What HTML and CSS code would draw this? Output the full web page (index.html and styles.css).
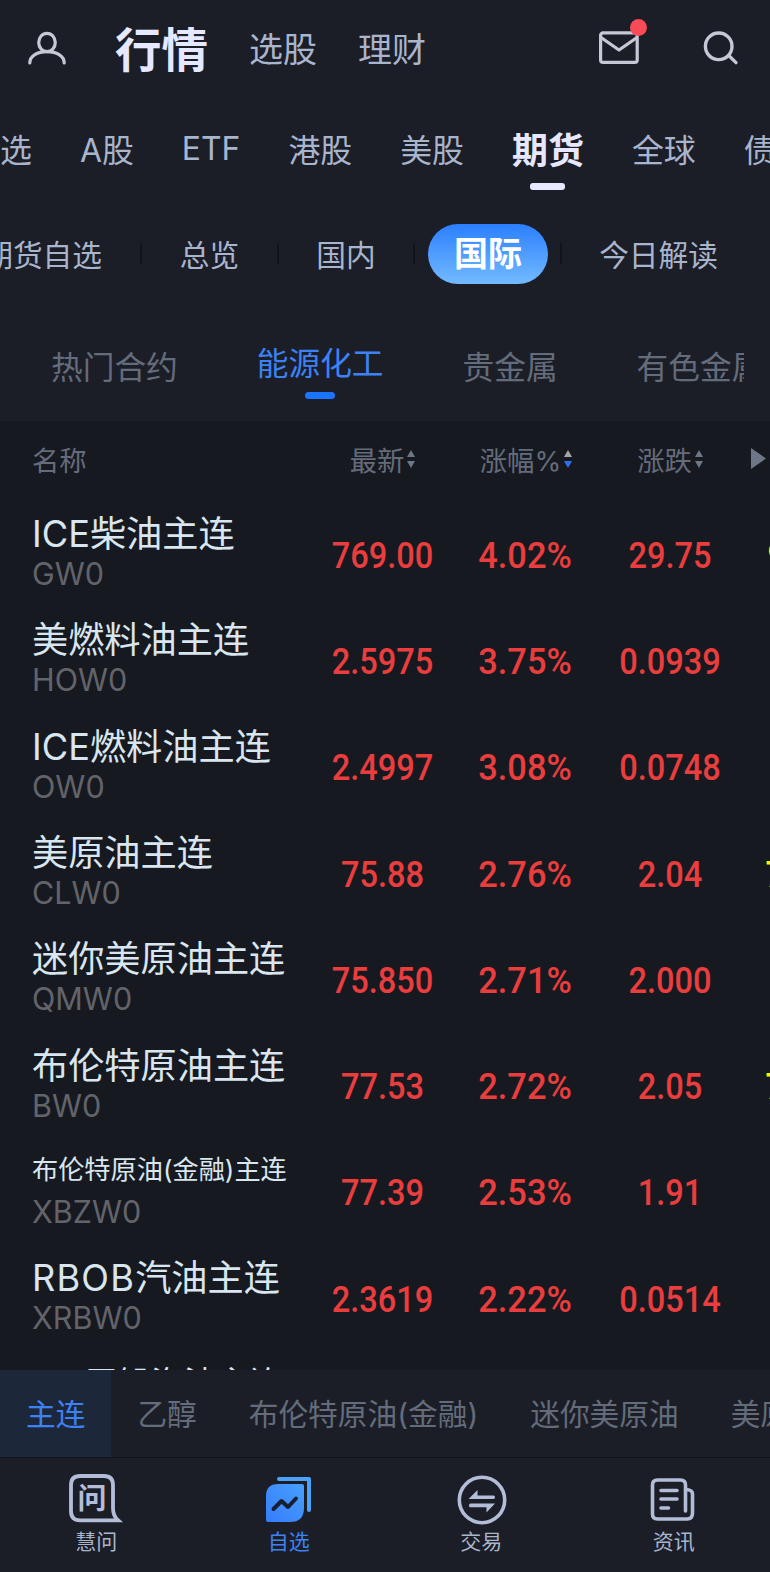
FILE: index.html
```html
<!DOCTYPE html>
<html lang="zh-CN">
<head>
  <meta charset="UTF-8" />
  <meta name="viewport" content="width=device-width, initial-scale=1" />
  <title>行情 - 期货</title>
  <link rel="stylesheet" href="styles.css">
</head>
<body>
<div class="app">

  <header class="topbar">
    <svg class="icon-user" viewBox="0 0 44 40" fill="none" stroke="#c6c8d6" stroke-width="3.2" stroke-linecap="round">
      <ellipse cx="22" cy="12.5" rx="8.3" ry="9.2"/>
      <path d="M4.800 33C4.800 26 12.500 21.600 22 21.600S39.200 26 39.200 33"/>
    </svg>
    <h1>行情</h1>
    <a class="top-link">选股</a>
    <a class="top-link">理财</a>
    <div class="top-actions">
      <div class="mail">
        <svg width="42" height="34" viewBox="0 0 42 34" fill="none" stroke="#c6c8d6" stroke-width="3.2" stroke-linejoin="round">
          <rect x="2.6" y="1.8" width="36.6" height="29.6" rx="2.5"/>
          <path d="M3 6.500L21 19 39 6.500"/>
        </svg>
        <span class="dot"></span>
      </div>
      <svg class="icon-search" width="38" height="36" viewBox="0 0 38 36" fill="none" stroke="#c6c8d6" stroke-width="3.4" stroke-linecap="round">
        <circle cx="16.7" cy="16.3" r="13.3"/>
        <path d="M27 25.800L34 32.600"/>
      </svg>
    </div>
  </header>

  <nav class="markets">
    <a>选</a>
    <a>A股</a>
    <a class="etf">ETF</a>
    <a>港股</a>
    <a>美股</a>
    <a class="active">期货</a>
    <a>全球</a>
    <a>债券</a>
  </nav>

  <nav class="regions">
    <a class="first">期货自选</a>
    <a>总览</a>
    <a>国内</a>
    <a><span class="pill">国际</span></a>
    <a>今日解读</a>
  </nav>

  <nav class="sectors">
    <a>热门合约</a>
    <a class="active">能源化工</a>
    <a>贵金属</a>
    <a>有色金属</a>
  </nav>

  <main class="quotes">
    <div class="row head">
      <span class="name">名称</span>
      <span>最新<svg class="sort" viewBox="0 0 8 18"><path class="up" d="M4 0l4 7H0z"/><path class="down" d="M0 11h8l-4 7z"/></svg></span>
      <span>涨幅%<svg class="sort desc" viewBox="0 0 8 18"><path class="up" d="M4 0l4 7H0z"/><path class="down" d="M0 11h8l-4 7z"/></svg></span>
      <span>涨跌<svg class="sort" viewBox="0 0 8 18"><path class="up" d="M4 0l4 7H0z"/><path class="down" d="M0 11h8l-4 7z"/></svg></span>
      <span class="more"><svg width="15" height="21" viewBox="0 0 15 21"><path d="M0 0l15 10.500L0 21z"/></svg></span>
    </div>
    <div class="row">
      <div class="name"><b>ICE柴油主连</b><small>GW0</small></div>
      <i>769.00</i><i class="pct">4.02%</i><i>29.75</i><i class="avg near">9.000</i>
    </div>
    <div class="row">
      <div class="name"><b>美燃料油主连</b><small>HOW0</small></div>
      <i>2.5975</i><i class="pct">3.75%</i><i>0.0939</i>
    </div>
    <div class="row">
      <div class="name"><b>ICE燃料油主连</b><small>OW0</small></div>
      <i>2.4997</i><i class="pct">3.08%</i><i>0.0748</i>
    </div>
    <div class="row">
      <div class="name"><b>美原油主连</b><small>CLW0</small></div>
      <i>75.88</i><i class="pct">2.76%</i><i>2.04</i><i class="avg">75.88</i>
    </div>
    <div class="row">
      <div class="name"><b>迷你美原油主连</b><small>QMW0</small></div>
      <i>75.850</i><i class="pct">2.71%</i><i>2.000</i>
    </div>
    <div class="row">
      <div class="name"><b>布伦特原油主连</b><small>BW0</small></div>
      <i>77.53</i><i class="pct">2.72%</i><i>2.05</i><i class="avg">77.53</i>
    </div>
    <div class="row">
      <div class="name"><b class="long">布伦特原油(金融)主连</b><small>XBZW0</small></div>
      <i>77.39</i><i class="pct">2.53%</i><i>1.91</i>
    </div>
    <div class="row">
      <div class="name"><b><span class="latin">RBOB</span>汽油主连</b><small>XRBW0</small></div>
      <i>2.3619</i><i class="pct">2.22%</i><i>0.0514</i>
    </div>
    <div class="row">
      <div class="name"><b class="mid">ICE无铅汽油主连</b><small></small></div>
    </div>
  </main>

  <nav class="contracts">
    <a class="active">主连</a>
    <a>乙醇</a>
    <a>布伦特原油(金融)</a>
    <a>迷你美原油</a>
    <a>美原油</a>
  </nav>

  <footer class="tabbar">
    <a>
      <svg viewBox="0 0 56 52" fill="none" stroke="#b3bdd8">
        <path stroke-width="3.8" stroke-linejoin="miter" d="M12 4H36Q45 4 45 13V36Q45 44 50 48.300H12Q3 48.300 3 39V13Q3 4 12 4Z"/>
        <text class="ask" x="24" y="37" text-anchor="middle">问</text>
      </svg>
      慧问
    </a>
    <a class="active">
      <svg viewBox="0 0 56 52">
        <defs>
          <linearGradient id="card" x1="1" y1="0" x2="0" y2="1">
            <stop offset="0" stop-color="#48a0fb"/>
            <stop offset="1" stop-color="#357cfd"/>
          </linearGradient>
        </defs>
        <path fill="url(#card)" d="M17 12H41Q43 12 43 14V36Q43 50 29 50H7Q5 50 5 48V24Q5 12 17 12Z"/>
        <path fill="none" stroke="#4aa3f8" stroke-width="4" stroke-linecap="round" stroke-linejoin="round" d="M18 7H48V38"/>
        <path fill="none" stroke="#18202f" stroke-width="4" stroke-linecap="round" stroke-linejoin="round" d="M12.500 37L20.500 29 27 35 35 26.500"/>
      </svg>
      自选
    </a>
    <a>
      <svg viewBox="0 0 56 52" fill="none" stroke="#b3bdd8">
        <circle cx="29" cy="28" r="22.7" stroke-width="3.6"/>
        <path fill="#b3bdd8" stroke="none" d="M15.500 27L24.500 18V23.500H40.500Q42 23.500 42 25.200T40.500 27ZM42 31.500L33.500 40.500V35.300H17.500Q16 35.300 16 33.400T17.500 31.500Z"/>
      </svg>
      交易
    </a>
    <a>
      <svg viewBox="0 0 56 52" fill="none" stroke="#b3bdd8" stroke-width="3.6" stroke-linecap="round">
        <path d="M39.500 39V13Q39.500 8 34.500 8H11.500Q6.500 8 6.500 13V42Q6.500 47 11.500 47H41Q46.500 47 46.500 41V22Q46.500 18 40.500 17.500"/>
        <path d="M15 18.500H31M15 27H31M15 36H22.500"/>
      </svg>
      资讯
    </a>
  </footer>

</div>
</body>
</html>
```
FILE: styles.css
```css
* {
  box-sizing: border-box;
}

body {
  margin: 0;
  background: #1b1e27;
  color: #a9b4cd;
  font-family: Inter, "Noto Sans CJK SC", sans-serif;
}

.app {
  width: 770px;
  height: 1572px;
  display: flex;
  flex-direction: column;
  overflow: hidden;
  white-space: nowrap;
}

/* top bar */
.topbar {
  height: 100px;
  display: flex;
  align-items: center;
  padding-left: 25px;
  font-size: 34px;
}

.icon-user {
  width: 44px;
  height: 40px;
}

h1 {
  margin: 0 41px 0 46px;
  font-size: 46.500px;
  line-height: 60px;
  font-weight: 700;
  color: #e6e8ff;
}

.top-link {
  margin-right: 41px;
  line-height: 50px;
}

.top-actions {
  margin-left: auto;
  margin-right: 30px;
  padding-bottom: 5px;
  display: flex;
  align-items: center;
  gap: 62px;
}

.mail {
  position: relative;
  height: 34px;
}

.dot {
  position: absolute;
  top: -12px;
  right: -7px;
  width: 17px;
  height: 17px;
  border-radius: 50%;
  background: #f94b57;
}

/* market tabs */
.markets {
  height: 100px;
  padding: 0 0 4px;
  display: flex;
  align-items: center;
  gap: 48px;
  font-size: 31.900px;
}

.markets .active {
  position: relative;
  font-size: 36px;
  font-weight: 700;
  color: #e6e8ff;
}

.markets .active::after {
  content: "";
  position: absolute;
  left: 18px;
  bottom: -16px;
  width: 35px;
  height: 7px;
  border-radius: 3px;
  background: #e6e8ff;
}

/* region tabs */
.regions {
  height: 107px;
  display: grid;
  grid-template-columns: 142px 137px 136px 147px 208px;
  align-items: center;
  font-size: 29.700px;
}

.regions a {
  display: flex;
  justify-content: center;
  align-items: center;
  height: 21px;
  border-right: 2px solid #12141b;
}

.regions a.first {
  justify-content: flex-end;
  padding-right: 38px;
}

.regions a:last-child {
  border: 0;
  padding-right: 15px;
}

.pill {
  width: 120px;
  flex: none;
  margin-left: 1px;
  line-height: 60px;
  border-radius: 30px;
  text-align: center;
  font-size: 34px;
  font-weight: 700;
  color: #fff;
  background: linear-gradient(#2b7fff, #73baff);
}

/* sector tabs */
.sectors {
  height: 114px;
  margin: 0 26px;
  padding: 1px 0 0 25px;
  display: flex;
  align-items: center;
  gap: 79px;
  overflow: hidden;
  font-size: 31.700px;
  color: #646c7b;
}

.sectors a {
  flex: none;
}

.sectors .active {
  position: relative;
  top: -4px;
  color: #3d82f5;
}

.sectors .active::after {
  content: "";
  position: absolute;
  left: 48px;
  bottom: -15px;
  width: 30px;
  height: 7px;
  border-radius: 4px;
  background: #1b74ff;
}

/* quotes */
.quotes {
  height: 949px;
  background: #171921;
  overflow: hidden;
}

.row {
  display: grid;
  grid-template-columns: 278px 145px 142px 146px 130px;
  height: 106.300px;
  padding-left: 32px;
  align-items: center;
}

.row div.name {
  padding-bottom: 2px;
}

.head {
  height: 80px;
  padding-bottom: 4px;
  font-size: 27.300px;
  color: #646c7b;
}

.head span {
  display: flex;
  align-items: center;
  justify-content: center;
}

.head .name {
  justify-content: flex-start;
}

.head .more {
  justify-content: flex-start;
  padding-left: 8px;
  padding-bottom: 1px;
}

.more path {
  fill: #6e7787;
}

.sort {
  width: 8px;
  height: 18px;
  margin-left: 3px;
  fill: #6e7787;
}

.desc .up {
  fill: #a6a6a6;
}

.desc .down {
  fill: #2e6ff0;
}

b {
  display: block;
  height: 42px;
  line-height: 42px;
  font-size: 36.200px;
  font-weight: 400;
  color: #d9e6ef;
}

b.long {
  font-size: 26.200px;
  line-height: 38px;
}

b.mid {
  font-size: 33px;
  line-height: 39px;
}

.latin {
  letter-spacing: 1.200px;
}

small {
  display: block;
  height: 38px;
  line-height: 38px;
  font-size: 30.500px;
  color: #62646a;
}

i {
  padding-top: 3px;
  font: 500 37px/44px Roboto, sans-serif;
  text-align: center;
  color: #ea3d3d;
  transform: scaleX(0.88);
}

.pct {
  margin-left: -2px;
  transform: scaleX(0.93);
}

.avg {
  color: #fff200;
  margin-left: -2px;
}

.avg.near {
  margin-left: 2px;
}

/* contract filter */
.contracts {
  height: 88px;
  display: flex;
  font-size: 29.700px;
  line-height: 89px;
  color: #646c7b;
  border-bottom: 1px solid #12141b;
}

.contracts a {
  height: 87px;
  padding: 0 26px;
}

.contracts .active {
  color: #3d82f5;
  background: #1d273a;
}

/* bottom tabs */
.tabbar {
  flex: 1;
  display: grid;
  grid-template-columns: repeat(4, 1fr);
  font-size: 21px;
}

.tabbar a {
  display: flex;
  flex-direction: column;
  align-items: center;
  line-height: 30px;
}

.tabbar svg {
  width: 56px;
  height: 52px;
  margin: 14px 0 3px;
  overflow: visible;
}

.tabbar .active {
  color: #3d82f5;
}

.ask {
  font: 700 29px "Noto Sans CJK SC", sans-serif;
  fill: #b3bdd8;
  stroke: none;
}
```
